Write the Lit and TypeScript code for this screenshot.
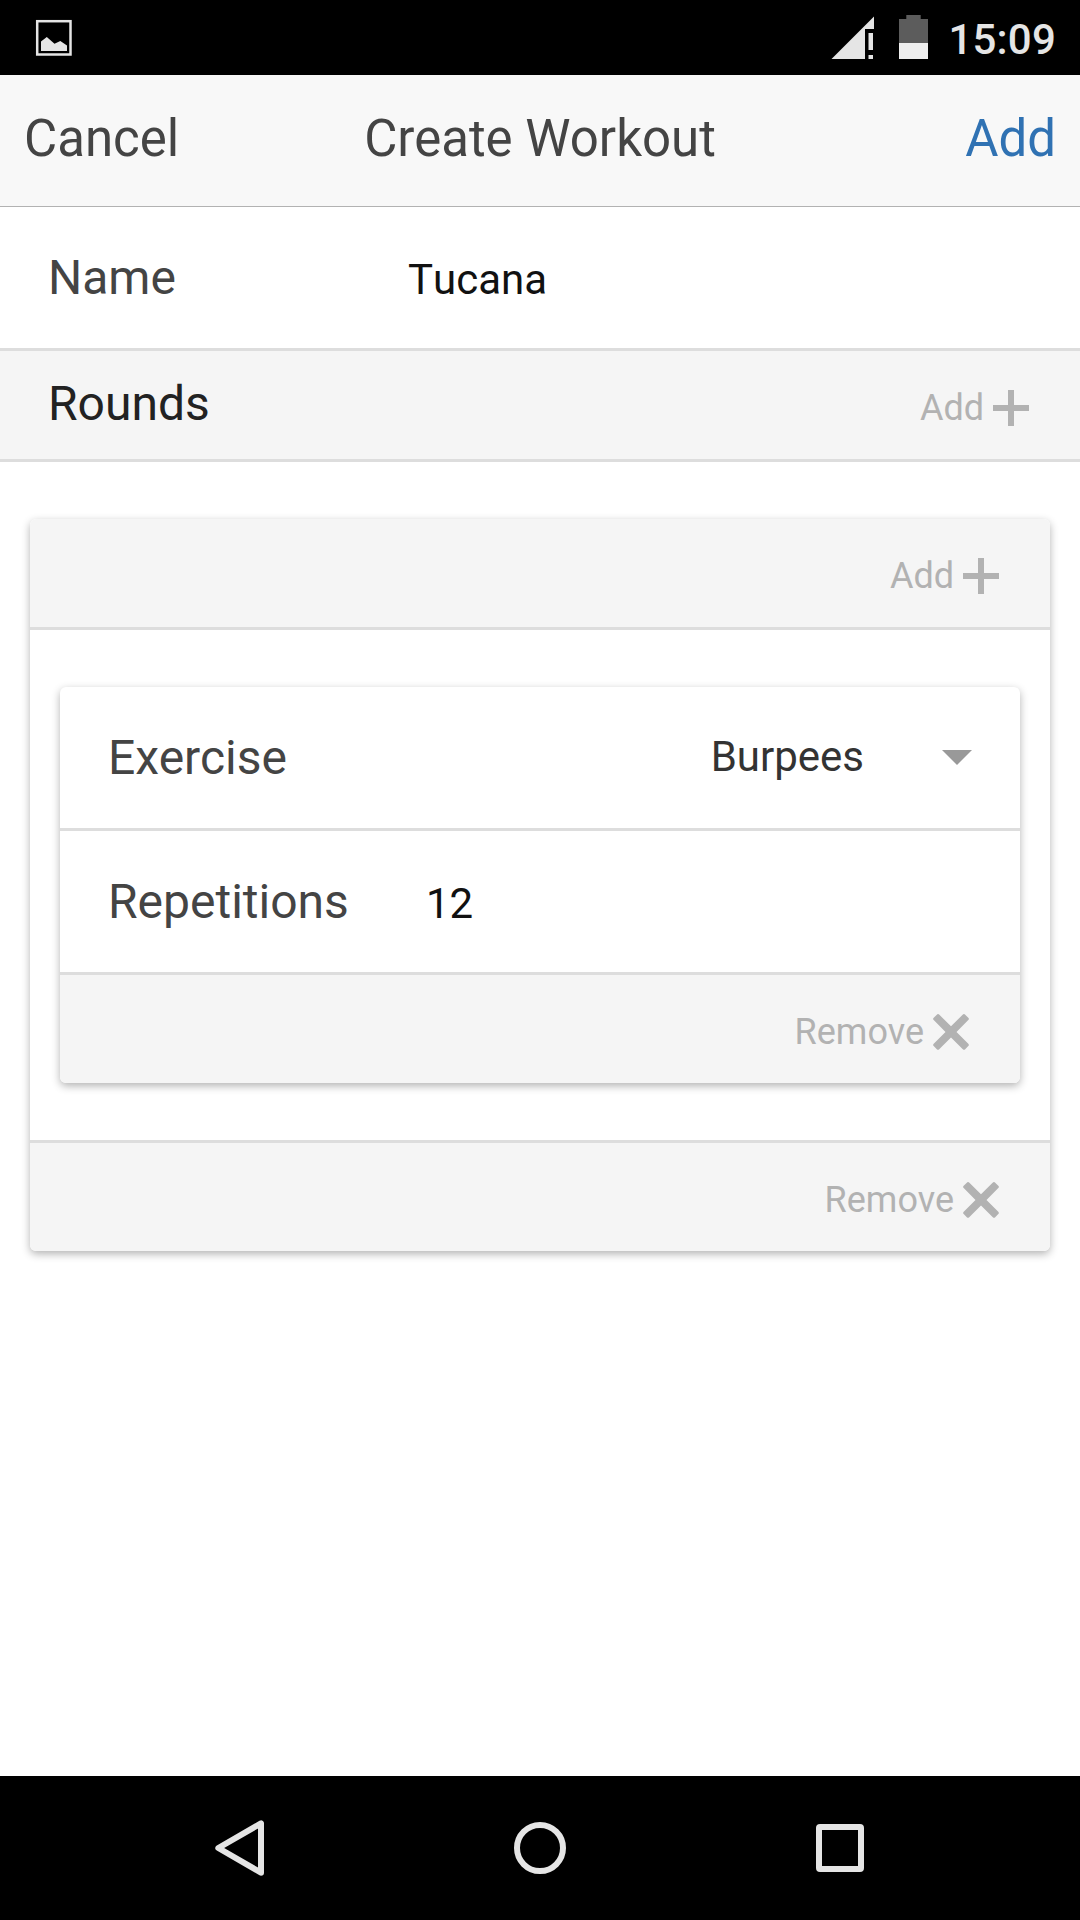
import { LitElement, html, css, svg } from "lit";
import { customElement, property } from "lit/decorators.js";

@customElement("action-button")
class ActionButton extends LitElement {
  @property() label = "";
  @property() icon: "plus" | "cross" = "plus";

  static styles = css`
    :host {
      display: flex;
      align-items: center;
      gap: 9px;
      height: 108px;
      color: #b2b2b2;
      font-size: 36px;
      line-height: 42px;
    }
    .label {
      padding-top: 5px;
    }
    .icon {
      display: block;
      width: 36px;
      height: 36px;
      margin-top: 6px;
      fill: currentColor;
    }
  `;

  render() {
    return html`
      <span class="label">${this.label}</span>
      <svg class="icon" viewBox="0 0 36 36">
        ${this.icon === "plus"
          ? svg`<path d="M15 0h6v15h15v6H21v15h-6V21H0v-6h15z" />`
          : svg`<path d="M5 0Q5.8 0 6.4 .8L18 12.3 29.6 .8Q30.2 0 31 0 31.600 0 32.200 .8L35.300 3.800Q36.500 5 35.300 6.100L23.500 17.900 35.300 29.700Q36.500 31 35.300 32L32.200 35.200Q31 36.500 29.800 35.200L18 23.500 6.200 35.200Q5 36.500 3.800 35.200L.7 32Q-.5 31 .7 29.700L12.500 17.900 .7 6.100Q-.5 5 .7 3.800L3.800 .8Q4.400 0 5 0z" />`}
      </svg>
    `;
  }
}

@customElement("app-root")
class AppRoot extends LitElement {
  static styles = css`
    :host {
      display: flex;
      flex-direction: column;
      width: 1080px;
      height: 1920px;
      overflow: hidden;
      background: #fff;
      font-family: Roboto, "Noto Sans", sans-serif;
      color: #444;
    }
    .status {
      display: flex;
      flex: none;
      align-items: center;
      justify-content: space-between;
      height: 75px;
      background: #000;
      color: #e5e5e5;
    }
    .status svg {
      display: block;
      height: 75px;
    }
    .system {
      display: flex;
      align-items: center;
      padding-right: 24px;
    }
    .clock {
      padding-top: 4px;
      font-size: 42px;
      font-weight: 500;
      letter-spacing: 0.2px;
      line-height: 50px;
    }
    .header {
      display: grid;
      grid-template-columns: 1fr auto 1fr;
      align-items: center;
      flex: none;
      box-sizing: border-box;
      height: 132px;
      padding: 0 24px 4px;
      border-bottom: 1px solid #b2b2b2;
      background: #f8f8f8;
      font-size: 51px;
      line-height: 60px;
    }
    .confirm {
      justify-self: end;
      color: #3072b3;
    }
    .content {
      flex: 1;
      min-height: 0;
    }
    .row {
      display: flex;
      align-items: center;
      box-sizing: border-box;
      height: 144px;
      padding: 0 48px;
      border-bottom: 3px solid #ddd;
      font-size: 48px;
      line-height: 56px;
    }
    .label.name {
      width: 360px;
    }
    .label.reps {
      width: 318px;
    }
    .value {
      padding-top: 4px;
      color: #111;
      font-size: 42px;
      font-kerning: none;
      line-height: 50px;
    }
    .picker {
      display: flex;
      align-items: center;
      gap: 78px;
      margin-left: auto;
      color: #333;
      font-size: 42px;
      line-height: 50px;
    }
    .picked {
      margin-top: -2px;
    }
    .arrow {
      width: 0;
      border: 15px solid transparent;
      border-top-color: #999;
      border-bottom: 0;
    }
    .bar {
      display: flex;
      align-items: center;
      justify-content: flex-end;
      height: 108px;
      padding: 0 51px;
      background: #f5f5f5;
    }
    .bar.top {
      border-bottom: 3px solid #ddd;
    }
    .bar.bottom {
      border-top: 3px solid #ddd;
    }
    .heading {
      margin-right: auto;
      margin-left: -3px;
      padding-bottom: 3px;
      color: #222;
      font-size: 48px;
      line-height: 56px;
    }
    .card {
      margin: 57px 30px;
      border-radius: 6px;
      background: #fff;
      box-shadow: 0 3px 9px rgba(0, 0, 0, 0.3);
    }
    .card > .bar.top {
      border-radius: 6px 6px 0 0;
    }
    .card > .bar.bottom {
      border-radius: 0 0 6px 6px;
    }
    .card .row.last {
      height: 141px;
      border-bottom: 0;
    }
    .round {
      display: flow-root;
    }
    .nav {
      display: flex;
      flex: none;
      align-items: center;
      justify-content: center;
      gap: 240px;
      height: 144px;
      background: #000;
    }
    .nav svg {
      width: 60px;
      height: 60px;
      fill: none;
      stroke: #e5e5e5;
      stroke-width: 6;
      stroke-linejoin: round;
    }
  `;

  render() {
    return html`
      <div class="status">
        <svg width="108" viewBox="0 0 108 75">
          <rect x="37.200" y="21.200" width="33.300" height="33.300" fill="none" stroke="#e5e5e5" stroke-width="2.500" />
          <path d="M41 51V41.500L46.800 37 54.500 43.700 60.300 41 67 45.500V51z" fill="#e5e5e5" />
        </svg>
        <div class="system">
          <svg width="119" viewBox="829 0 119 75">
            <path d="M831.500 59L874 16.500V29H865V59zM868.500 33H873V50H868.500zM868.500 55H873V59H868.500z" fill="#e5e5e5" />
            <path d="M899 43V19H906.300V15H920.700V19H928V43z" fill="#5c5c5c" />
            <path d="M899 43H928V59H899z" fill="#eee" />
          </svg>
          <span class="clock">15:09</span>
        </div>
      </div>

      <div class="header">
        <span>Cancel</span>
        <span>Create Workout</span>
        <span class="confirm">Add</span>
      </div>

      <div class="content">
        <div class="row">
          <span class="label name">Name</span>
          <span class="value">Tucana</span>
        </div>
        <div class="bar top">
          <span class="heading">Rounds</span>
          <action-button label="Add" icon="plus"></action-button>
        </div>

        <div class="card round">
          <div class="bar top">
            <action-button label="Add" icon="plus"></action-button>
          </div>
          <div class="card">
            <div class="row">
              <span class="label">Exercise</span>
              <div class="picker">
                <span class="picked">Burpees</span>
                <span class="arrow"></span>
              </div>
            </div>
            <div class="row last">
              <span class="label reps">Repetitions</span>
              <span class="value">12</span>
            </div>
            <div class="bar bottom">
              <action-button label="Remove" icon="cross"></action-button>
            </div>
          </div>
          <div class="bar bottom">
            <action-button label="Remove" icon="cross"></action-button>
          </div>
        </div>
      </div>

      <div class="nav">
        <svg viewBox="0 0 60 60"><path d="M8.300 30L51 5.300V54.700z" /></svg>
        <svg viewBox="0 0 60 60"><circle cx="30" cy="30" r="23" /></svg>
        <svg viewBox="0 0 60 60"><rect x="9" y="9" width="42" height="42" rx="1" /></svg>
      </div>
    `;
  }
}
